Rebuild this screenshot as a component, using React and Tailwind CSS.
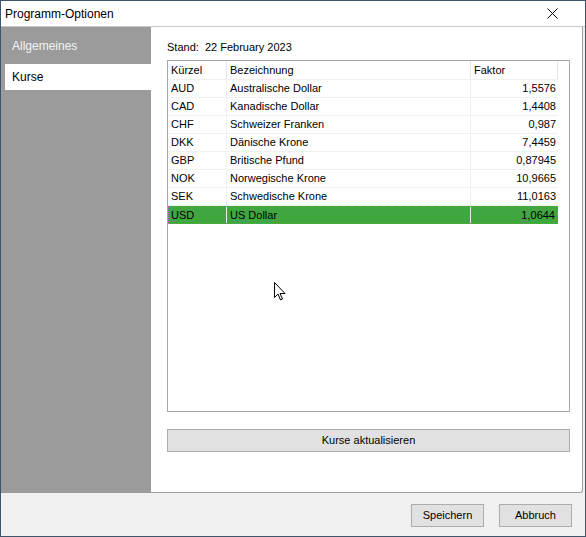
import React from 'react';

const rates = [
  ['AUD', 'Australische Dollar', '1,5576'],
  ['CAD', 'Kanadische Dollar', '1,4408'],
  ['CHF', 'Schweizer Franken', '0,987'],
  ['DKK', 'Dänische Krone', '7,4459'],
  ['GBP', 'Britische Pfund', '0,87945'],
  ['NOK', 'Norwegische Krone', '10,9665'],
  ['SEK', 'Schwedische Krone', '11,0163'],
  ['USD', 'US Dollar', '1,0644'],
];

const font = { fontFamily: '"Liberation Sans", Arial, sans-serif' };

const App = () => {
  return (
    <div
      className="relative w-[586px] h-[537px] border border-[#3e5468] bg-[#f0f0f0] flex flex-col text-black"
      style={font}
    >
      {/* Title bar */}
      <div className="h-[26px] bg-white flex items-center justify-between pl-[4px] pr-[27px] border-b border-[#c8c8c8]">
        <span className="text-[12px]">Programm-Optionen</span>
        <svg width="11" height="11" viewBox="0 0 11 11">
          <path d="M0.5 0.5 L10.5 10.5 M10.5 0.5 L0.5 10.5" stroke="#000" strokeWidth="1" />
        </svg>
      </div>

      {/* Main */}
      <div className="flex flex-1 bg-[#9b9b9b]">
        <div className="w-[150px] pt-[6px] pl-[4px] flex flex-col gap-[5px] text-[12px]">
          <div className="h-[26px] flex items-center pl-[7px] text-[#f4f4f4]">Allgemeines</div>
          <div className="h-[26px] flex items-center pl-[7px] bg-white">Kurse</div>
        </div>

        <div className="flex-1 flex bg-[#f0f0f0]">
          <div className="flex-1 mr-[2px] bg-white border-r border-b border-[#a0a0a0] rounded-tl-[4px] rounded-br-[3px] pl-[16px] pr-[12px] pt-[11px] flex flex-col">
            <div className="text-[11px] h-[18px] flex items-center">Stand:&nbsp; 22 February 2023</div>
            <div className="mt-[4px] h-[352px] border border-[#a8a8a8] text-[11px] flex flex-col">
              <div className="flex h-[19px] w-[390px] border-b border-[#f0f0f0]">
                <div className="w-[59px] pl-[3px] border-r border-[#e5e5e5] flex items-center">Kürzel</div>
                <div className="w-[244px] pl-[3px] border-r border-[#e5e5e5] flex items-center">Bezeichnung</div>
                <div className="w-[87px] pl-[3px] border-r border-[#e5e5e5] flex items-center">Faktor</div>
              </div>
              {rates.map(([code, name, f], i) => {
                const sel = i === rates.length - 1;
                return (
                  <div
                    key={code}
                    className={
                      sel
                        ? 'flex h-[18px] w-[390px] bg-[#41a641] border border-dotted border-[#d24fd2]'
                        : 'flex h-[18px] w-[390px] border-b border-[#f0f0f0]'
                    }
                  >
                    <div className={sel ? 'w-[58px] pl-[2px] border-r border-[#dff0df] flex items-center' : 'w-[59px] pl-[3px] border-r border-[#f0f0f0] flex items-center'}>{code}</div>
                    <div className={sel ? 'w-[244px] pl-[3px] border-r border-[#dff0df] flex items-center' : 'w-[244px] pl-[3px] border-r border-[#f0f0f0] flex items-center'}>{name}</div>
                    <div className="flex-1 pr-[2px] flex items-center justify-end">{f}</div>
                  </div>
                );
              })}
            </div>
            <button className="mt-[17px] h-[23px] bg-[#e1e1e1] border border-[#adadad] text-[11px]">
              Kurse aktualisieren
            </button>
          </div>
        </div>
      </div>

      {/* Footer */}
      <div className="h-[43px] flex justify-end items-start pt-[11px] pr-[13px] gap-[15px] bg-[#f0f0f0]">
        <button className="w-[73px] h-[23px] bg-[#e1e1e1] border border-[#adadad] text-[11px]">Speichern</button>
        <button className="w-[73px] h-[23px] bg-[#e1e1e1] border border-[#adadad] text-[11px]">Abbruch</button>
      </div>

      {/* Mouse cursor */}
      <svg className="absolute left-[273px] top-[281px]" width="13" height="20" viewBox="0 0 13 20">
        <path
          d="M0.5 0.5 L0.5 15.5 L4 12 L6.5 18 L8.5 17 L6 11.5 L11 11.5 Z"
          fill="#fff"
          stroke="#000"
          strokeWidth="1"
          strokeLinejoin="miter"
        />
      </svg>
    </div>
  );
};

export default App;
